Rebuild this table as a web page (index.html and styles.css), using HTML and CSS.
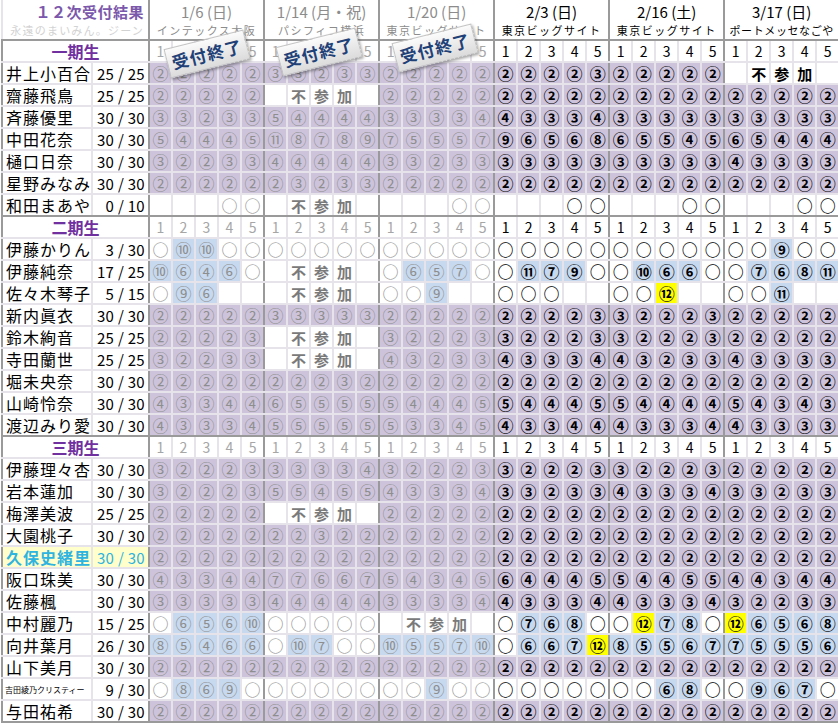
FILE: index.html
```html
<!DOCTYPE html>
<html lang="ja">
<head>
<meta charset="utf-8">
<title>12次受付結果</title>
<link rel="stylesheet" href="styles.css">
</head>
<body>
<div class="wrap">
<table class="grid">
<colgroup>
<col class="c-nm"><col class="c-ct">
<col class="c"><col class="c"><col class="c"><col class="c"><col class="c">
<col class="c"><col class="c"><col class="c"><col class="c"><col class="c">
<col class="c"><col class="c"><col class="c"><col class="c"><col class="c">
<col class="c"><col class="c"><col class="c"><col class="c"><col class="c">
<col class="c"><col class="c"><col class="c"><col class="c"><col class="c">
<col class="c"><col class="c"><col class="c"><col class="c"><col class="c">
</colgroup>
<tr class="hd">
<td colspan="2" class="ttl"><div class="t1">１２次受付結果</div><div class="t2">永遠のまいみん。ジーン</div></td>
<td colspan="5" class="past"><div class="d">1/6 (日)</div><div class="v">インテックス大阪</div></td>
<td colspan="5" class="past"><div class="d">1/14 (月・祝)</div><div class="v">パシフィコ横浜</div></td>
<td colspan="5" class="past"><div class="d">1/20 (日)</div><div class="v">東京ビッグサイト</div></td>
<td colspan="5"><div class="d">2/3 (日)</div><div class="v">東京ビッグサイト</div></td>
<td colspan="5"><div class="d">2/16 (土)</div><div class="v">東京ビッグサイト</div></td>
<td colspan="5"><div class="d">3/17 (日)</div><div class="v vw">ポートメッセなごや</div></td>
</tr>
<tr class="sec"><td colspan="2" class="sh">一期生</td><td>1</td><td>2</td><td>3</td><td>4</td><td>5</td><td>1</td><td>2</td><td>3</td><td>4</td><td>5</td><td>1</td><td>2</td><td>3</td><td>4</td><td>5</td><td>1</td><td>2</td><td>3</td><td>4</td><td>5</td><td>1</td><td>2</td><td>3</td><td>4</td><td>5</td><td>1</td><td>2</td><td>3</td><td>4</td><td>5</td></tr>
<tr class="r"><td class="nm">井上小百合</td><td class="ct">25 / 25</td><td class="p">②</td><td class="p">②</td><td class="p">②</td><td class="p">②</td><td class="p">②</td><td class="p">③</td><td class="p">③</td><td class="p">②</td><td class="p">③</td><td class="p">③</td><td class="p">②</td><td class="p">②</td><td class="p">②</td><td class="p">②</td><td class="p">②</td><td class="p">②</td><td class="p">②</td><td class="p">②</td><td class="p">②</td><td class="p">③</td><td class="p">②</td><td class="p">②</td><td class="p">②</td><td class="p">②</td><td class="p">②</td><td></td><td class="n">不</td><td class="n">参</td><td class="n">加</td><td></td></tr>
<tr class="r"><td class="nm">齋藤飛鳥</td><td class="ct">25 / 25</td><td class="p">②</td><td class="p">②</td><td class="p">②</td><td class="p">②</td><td class="p">②</td><td></td><td class="n">不</td><td class="n">参</td><td class="n">加</td><td></td><td class="p">②</td><td class="p">②</td><td class="p">②</td><td class="p">②</td><td class="p">②</td><td class="p">②</td><td class="p">②</td><td class="p">②</td><td class="p">②</td><td class="p">②</td><td class="p">②</td><td class="p">②</td><td class="p">②</td><td class="p">②</td><td class="p">②</td><td class="p">②</td><td class="p">②</td><td class="p">②</td><td class="p">②</td><td class="p">②</td></tr>
<tr class="r"><td class="nm">斉藤優里</td><td class="ct">30 / 30</td><td class="p">③</td><td class="p">③</td><td class="p">②</td><td class="p">③</td><td class="p">③</td><td class="p">⑤</td><td class="p">④</td><td class="p">④</td><td class="p">④</td><td class="p">④</td><td class="p">③</td><td class="p">③</td><td class="p">③</td><td class="p">③</td><td class="p">④</td><td class="p">④</td><td class="p">③</td><td class="p">③</td><td class="p">③</td><td class="p">④</td><td class="p">③</td><td class="p">③</td><td class="p">③</td><td class="p">③</td><td class="p">③</td><td class="p">③</td><td class="p">③</td><td class="p">③</td><td class="p">③</td><td class="p">③</td></tr>
<tr class="r"><td class="nm">中田花奈</td><td class="ct">30 / 30</td><td class="p">⑤</td><td class="p">④</td><td class="p">④</td><td class="p">④</td><td class="p">⑤</td><td class="p">⑪</td><td class="p">⑧</td><td class="p">⑦</td><td class="p">⑧</td><td class="p">⑨</td><td class="p">⑦</td><td class="p">⑤</td><td class="p">⑤</td><td class="p">⑤</td><td class="p">⑦</td><td class="p">⑨</td><td class="p">⑥</td><td class="p">⑤</td><td class="p">⑥</td><td class="p">⑧</td><td class="p">⑥</td><td class="p">⑤</td><td class="p">⑤</td><td class="p">④</td><td class="p">⑤</td><td class="p">⑥</td><td class="p">⑤</td><td class="p">④</td><td class="p">④</td><td class="p">④</td></tr>
<tr class="r"><td class="nm">樋口日奈</td><td class="ct">30 / 30</td><td class="p">③</td><td class="p">②</td><td class="p">②</td><td class="p">③</td><td class="p">③</td><td class="p">④</td><td class="p">④</td><td class="p">④</td><td class="p">④</td><td class="p">④</td><td class="p">③</td><td class="p">③</td><td class="p">②</td><td class="p">③</td><td class="p">③</td><td class="p">③</td><td class="p">③</td><td class="p">③</td><td class="p">③</td><td class="p">③</td><td class="p">③</td><td class="p">③</td><td class="p">③</td><td class="p">③</td><td class="p">③</td><td class="p">④</td><td class="p">③</td><td class="p">③</td><td class="p">③</td><td class="p">③</td></tr>
<tr class="r"><td class="nm">星野みなみ</td><td class="ct">30 / 30</td><td class="p">②</td><td class="p">②</td><td class="p">②</td><td class="p">②</td><td class="p">②</td><td class="p">②</td><td class="p">③</td><td class="p">②</td><td class="p">③</td><td class="p">③</td><td class="p">②</td><td class="p">②</td><td class="p">②</td><td class="p">②</td><td class="p">②</td><td class="p">②</td><td class="p">②</td><td class="p">②</td><td class="p">②</td><td class="p">②</td><td class="p">②</td><td class="p">②</td><td class="p">②</td><td class="p">②</td><td class="p">②</td><td class="p">②</td><td class="p">②</td><td class="p">②</td><td class="p">②</td><td class="p">②</td></tr>
<tr class="r last"><td class="nm">和田まあや</td><td class="ct">0 / 10</td><td></td><td></td><td></td><td>○</td><td>○</td><td></td><td class="n">不</td><td class="n">参</td><td class="n">加</td><td></td><td></td><td></td><td></td><td>○</td><td>○</td><td></td><td></td><td></td><td>○</td><td>○</td><td></td><td></td><td></td><td>○</td><td>○</td><td></td><td></td><td></td><td>○</td><td>○</td></tr>
<tr class="sec"><td colspan="2" class="sh">二期生</td><td>1</td><td>2</td><td>3</td><td>4</td><td>5</td><td>1</td><td>2</td><td>3</td><td>4</td><td>5</td><td>1</td><td>2</td><td>3</td><td>4</td><td>5</td><td>1</td><td>2</td><td>3</td><td>4</td><td>5</td><td>1</td><td>2</td><td>3</td><td>4</td><td>5</td><td>1</td><td>2</td><td>3</td><td>4</td><td>5</td></tr>
<tr class="r"><td class="nm">伊藤かりん</td><td class="ct">3 / 30</td><td>○</td><td class="b">⑩</td><td class="b">⑩</td><td>○</td><td>○</td><td>○</td><td>○</td><td>○</td><td>○</td><td>○</td><td>○</td><td>○</td><td>○</td><td>○</td><td>○</td><td>○</td><td>○</td><td>○</td><td>○</td><td>○</td><td>○</td><td>○</td><td>○</td><td>○</td><td>○</td><td>○</td><td>○</td><td class="b">⑨</td><td>○</td><td>○</td></tr>
<tr class="r"><td class="nm">伊藤純奈</td><td class="ct">17 / 25</td><td class="b">⑩</td><td class="b">⑥</td><td class="b">④</td><td class="b">⑥</td><td>○</td><td></td><td class="n">不</td><td class="n">参</td><td class="n">加</td><td></td><td>○</td><td class="b">⑥</td><td class="b">⑤</td><td class="b">⑦</td><td>○</td><td>○</td><td class="b">⑪</td><td class="b">⑦</td><td class="b">⑨</td><td>○</td><td>○</td><td class="b">⑩</td><td class="b">⑥</td><td class="b">⑥</td><td>○</td><td>○</td><td class="b">⑦</td><td class="b">⑥</td><td class="b">⑧</td><td class="b">⑪</td></tr>
<tr class="r"><td class="nm">佐々木琴子</td><td class="ct">5 / 15</td><td>○</td><td class="b">⑨</td><td class="b">⑥</td><td></td><td></td><td></td><td class="n">不</td><td class="n">参</td><td class="n">加</td><td></td><td>○</td><td>○</td><td class="b">⑨</td><td></td><td></td><td>○</td><td>○</td><td>○</td><td></td><td></td><td>○</td><td>○</td><td class="y">⑫</td><td></td><td></td><td>○</td><td>○</td><td class="b">⑪</td><td></td><td></td></tr>
<tr class="r"><td class="nm">新内眞衣</td><td class="ct">30 / 30</td><td class="p">②</td><td class="p">②</td><td class="p">②</td><td class="p">②</td><td class="p">②</td><td class="p">③</td><td class="p">③</td><td class="p">③</td><td class="p">③</td><td class="p">③</td><td class="p">②</td><td class="p">②</td><td class="p">②</td><td class="p">②</td><td class="p">②</td><td class="p">②</td><td class="p">②</td><td class="p">②</td><td class="p">②</td><td class="p">③</td><td class="p">③</td><td class="p">②</td><td class="p">②</td><td class="p">②</td><td class="p">③</td><td class="p">②</td><td class="p">②</td><td class="p">②</td><td class="p">②</td><td class="p">②</td></tr>
<tr class="r"><td class="nm">鈴木絢音</td><td class="ct">25 / 25</td><td class="p">②</td><td class="p">②</td><td class="p">②</td><td class="p">②</td><td class="p">③</td><td></td><td class="n">不</td><td class="n">参</td><td class="n">加</td><td></td><td class="p">③</td><td class="p">②</td><td class="p">②</td><td class="p">②</td><td class="p">③</td><td class="p">③</td><td class="p">②</td><td class="p">②</td><td class="p">②</td><td class="p">③</td><td class="p">③</td><td class="p">②</td><td class="p">②</td><td class="p">②</td><td class="p">③</td><td class="p">②</td><td class="p">②</td><td class="p">②</td><td class="p">②</td><td class="p">②</td></tr>
<tr class="r"><td class="nm">寺田蘭世</td><td class="ct">25 / 25</td><td class="p">③</td><td class="p">②</td><td class="p">②</td><td class="p">③</td><td class="p">③</td><td></td><td class="n">不</td><td class="n">参</td><td class="n">加</td><td></td><td class="p">④</td><td class="p">③</td><td class="p">②</td><td class="p">③</td><td class="p">③</td><td class="p">④</td><td class="p">③</td><td class="p">③</td><td class="p">③</td><td class="p">④</td><td class="p">④</td><td class="p">③</td><td class="p">②</td><td class="p">③</td><td class="p">③</td><td class="p">④</td><td class="p">③</td><td class="p">③</td><td class="p">③</td><td class="p">③</td></tr>
<tr class="r"><td class="nm">堀未央奈</td><td class="ct">30 / 30</td><td class="p">②</td><td class="p">②</td><td class="p">②</td><td class="p">②</td><td class="p">②</td><td class="p">②</td><td class="p">②</td><td class="p">②</td><td class="p">③</td><td class="p">②</td><td class="p">②</td><td class="p">②</td><td class="p">②</td><td class="p">②</td><td class="p">②</td><td class="p">②</td><td class="p">②</td><td class="p">②</td><td class="p">②</td><td class="p">②</td><td class="p">②</td><td class="p">②</td><td class="p">②</td><td class="p">②</td><td class="p">②</td><td class="p">②</td><td class="p">②</td><td class="p">②</td><td class="p">②</td><td class="p">②</td></tr>
<tr class="r"><td class="nm">山崎怜奈</td><td class="ct">30 / 30</td><td class="p">④</td><td class="p">③</td><td class="p">③</td><td class="p">④</td><td class="p">④</td><td class="p">⑥</td><td class="p">⑤</td><td class="p">⑤</td><td class="p">⑤</td><td class="p">⑤</td><td class="p">⑤</td><td class="p">④</td><td class="p">④</td><td class="p">④</td><td class="p">⑤</td><td class="p">⑤</td><td class="p">④</td><td class="p">④</td><td class="p">④</td><td class="p">⑤</td><td class="p">⑤</td><td class="p">④</td><td class="p">④</td><td class="p">④</td><td class="p">④</td><td class="p">⑤</td><td class="p">④</td><td class="p">③</td><td class="p">④</td><td class="p">③</td></tr>
<tr class="r last"><td class="nm">渡辺みり愛</td><td class="ct">30 / 30</td><td class="p">④</td><td class="p">③</td><td class="p">③</td><td class="p">③</td><td class="p">④</td><td class="p">⑤</td><td class="p">⑤</td><td class="p">⑤</td><td class="p">⑤</td><td class="p">⑤</td><td class="p">⑤</td><td class="p">③</td><td class="p">③</td><td class="p">④</td><td class="p">⑤</td><td class="p">④</td><td class="p">③</td><td class="p">③</td><td class="p">④</td><td class="p">④</td><td class="p">④</td><td class="p">③</td><td class="p">③</td><td class="p">③</td><td class="p">④</td><td class="p">④</td><td class="p">③</td><td class="p">③</td><td class="p">③</td><td class="p">③</td></tr>
<tr class="sec"><td colspan="2" class="sh">三期生</td><td>1</td><td>2</td><td>3</td><td>4</td><td>5</td><td>1</td><td>2</td><td>3</td><td>4</td><td>5</td><td>1</td><td>2</td><td>3</td><td>4</td><td>5</td><td>1</td><td>2</td><td>3</td><td>4</td><td>5</td><td>1</td><td>2</td><td>3</td><td>4</td><td>5</td><td>1</td><td>2</td><td>3</td><td>4</td><td>5</td></tr>
<tr class="r"><td class="nm">伊藤理々杏</td><td class="ct">30 / 30</td><td class="p">③</td><td class="p">②</td><td class="p">②</td><td class="p">②</td><td class="p">③</td><td class="p">③</td><td class="p">③</td><td class="p">③</td><td class="p">③</td><td class="p">④</td><td class="p">③</td><td class="p">②</td><td class="p">②</td><td class="p">②</td><td class="p">③</td><td class="p">③</td><td class="p">②</td><td class="p">②</td><td class="p">②</td><td class="p">③</td><td class="p">③</td><td class="p">②</td><td class="p">②</td><td class="p">②</td><td class="p">③</td><td class="p">②</td><td class="p">②</td><td class="p">②</td><td class="p">②</td><td class="p">②</td></tr>
<tr class="r"><td class="nm">岩本蓮加</td><td class="ct">30 / 30</td><td class="p">③</td><td class="p">②</td><td class="p">②</td><td class="p">②</td><td class="p">③</td><td class="p">⑤</td><td class="p">⑤</td><td class="p">④</td><td class="p">⑤</td><td class="p">⑤</td><td class="p">④</td><td class="p">③</td><td class="p">③</td><td class="p">③</td><td class="p">④</td><td class="p">③</td><td class="p">③</td><td class="p">②</td><td class="p">③</td><td class="p">③</td><td class="p">④</td><td class="p">③</td><td class="p">③</td><td class="p">③</td><td class="p">④</td><td class="p">③</td><td class="p">③</td><td class="p">②</td><td class="p">③</td><td class="p">③</td></tr>
<tr class="r"><td class="nm">梅澤美波</td><td class="ct">25 / 25</td><td class="p">②</td><td class="p">②</td><td class="p">②</td><td class="p">②</td><td class="p">②</td><td></td><td class="n">不</td><td class="n">参</td><td class="n">加</td><td></td><td class="p">②</td><td class="p">②</td><td class="p">②</td><td class="p">②</td><td class="p">②</td><td class="p">②</td><td class="p">②</td><td class="p">②</td><td class="p">②</td><td class="p">②</td><td class="p">②</td><td class="p">②</td><td class="p">②</td><td class="p">②</td><td class="p">②</td><td class="p">②</td><td class="p">②</td><td class="p">②</td><td class="p">②</td><td class="p">②</td></tr>
<tr class="r"><td class="nm">大園桃子</td><td class="ct">30 / 30</td><td class="p">②</td><td class="p">②</td><td class="p">②</td><td class="p">②</td><td class="p">②</td><td class="p">②</td><td class="p">②</td><td class="p">③</td><td class="p">②</td><td class="p">②</td><td class="p">②</td><td class="p">②</td><td class="p">②</td><td class="p">②</td><td class="p">②</td><td class="p">②</td><td class="p">②</td><td class="p">②</td><td class="p">②</td><td class="p">②</td><td class="p">②</td><td class="p">②</td><td class="p">②</td><td class="p">②</td><td class="p">②</td><td class="p">②</td><td class="p">②</td><td class="p">②</td><td class="p">②</td><td class="p">②</td></tr>
<tr class="r kubo"><td class="nm">久保史緒里</td><td class="ct">30 / 30</td><td class="p">②</td><td class="p">②</td><td class="p">②</td><td class="p">②</td><td class="p">②</td><td class="p">②</td><td class="p">②</td><td class="p">②</td><td class="p">②</td><td class="p">②</td><td class="p">②</td><td class="p">②</td><td class="p">②</td><td class="p">②</td><td class="p">②</td><td class="p">②</td><td class="p">②</td><td class="p">②</td><td class="p">②</td><td class="p">②</td><td class="p">②</td><td class="p">②</td><td class="p">②</td><td class="p">②</td><td class="p">②</td><td class="p">②</td><td class="p">②</td><td class="p">②</td><td class="p">②</td><td class="p">②</td></tr>
<tr class="r"><td class="nm">阪口珠美</td><td class="ct">30 / 30</td><td class="p">④</td><td class="p">③</td><td class="p">③</td><td class="p">④</td><td class="p">④</td><td class="p">⑦</td><td class="p">⑦</td><td class="p">⑥</td><td class="p">⑥</td><td class="p">⑦</td><td class="p">⑤</td><td class="p">④</td><td class="p">③</td><td class="p">④</td><td class="p">⑤</td><td class="p">⑥</td><td class="p">④</td><td class="p">④</td><td class="p">④</td><td class="p">⑤</td><td class="p">⑤</td><td class="p">④</td><td class="p">④</td><td class="p">⑤</td><td class="p">⑤</td><td class="p">④</td><td class="p">④</td><td class="p">③</td><td class="p">④</td><td class="p">④</td></tr>
<tr class="r"><td class="nm">佐藤楓</td><td class="ct">30 / 30</td><td class="p">③</td><td class="p">③</td><td class="p">③</td><td class="p">③</td><td class="p">③</td><td class="p">④</td><td class="p">④</td><td class="p">④</td><td class="p">④</td><td class="p">④</td><td class="p">③</td><td class="p">③</td><td class="p">③</td><td class="p">③</td><td class="p">④</td><td class="p">④</td><td class="p">③</td><td class="p">③</td><td class="p">③</td><td class="p">④</td><td class="p">④</td><td class="p">③</td><td class="p">③</td><td class="p">③</td><td class="p">④</td><td class="p">③</td><td class="p">②</td><td class="p">②</td><td class="p">③</td><td class="p">③</td></tr>
<tr class="r"><td class="nm">中村麗乃</td><td class="ct">15 / 25</td><td>○</td><td class="b">⑥</td><td class="b">⑤</td><td class="b">⑥</td><td class="b">⑩</td><td>○</td><td>○</td><td>○</td><td>○</td><td>○</td><td></td><td class="n">不</td><td class="n">参</td><td class="n">加</td><td></td><td>○</td><td class="b">⑦</td><td class="b">⑥</td><td class="b">⑧</td><td>○</td><td>○</td><td class="y">⑫</td><td class="b">⑦</td><td class="b">⑧</td><td>○</td><td class="y">⑫</td><td class="b">⑥</td><td class="b">⑤</td><td class="b">⑥</td><td class="b">⑧</td></tr>
<tr class="r"><td class="nm">向井葉月</td><td class="ct">26 / 30</td><td class="b">⑧</td><td class="b">⑤</td><td class="b">④</td><td class="b">⑥</td><td class="b">⑥</td><td>○</td><td class="b">⑩</td><td class="b">⑦</td><td>○</td><td>○</td><td class="b">⑩</td><td class="b">⑤</td><td class="b">⑤</td><td class="b">⑦</td><td class="b">⑩</td><td>○</td><td class="b">⑥</td><td class="b">⑥</td><td class="b">⑦</td><td class="y">⑫</td><td class="b">⑧</td><td class="b">⑤</td><td class="b">⑤</td><td class="b">⑥</td><td class="b">⑦</td><td class="b">⑦</td><td class="b">⑤</td><td class="b">⑤</td><td class="b">⑤</td><td class="b">⑥</td></tr>
<tr class="r"><td class="nm">山下美月</td><td class="ct">30 / 30</td><td class="p">②</td><td class="p">②</td><td class="p">②</td><td class="p">②</td><td class="p">②</td><td class="p">②</td><td class="p">②</td><td class="p">②</td><td class="p">②</td><td class="p">②</td><td class="p">②</td><td class="p">②</td><td class="p">②</td><td class="p">②</td><td class="p">②</td><td class="p">②</td><td class="p">②</td><td class="p">②</td><td class="p">②</td><td class="p">②</td><td class="p">②</td><td class="p">②</td><td class="p">②</td><td class="p">②</td><td class="p">②</td><td class="p">②</td><td class="p">②</td><td class="p">②</td><td class="p">②</td><td class="p">②</td></tr>
<tr class="r"><td class="nm sm">吉田綾乃クリスティー</td><td class="ct">9 / 30</td><td>○</td><td class="b">⑧</td><td class="b">⑥</td><td class="b">⑨</td><td>○</td><td>○</td><td>○</td><td>○</td><td>○</td><td>○</td><td>○</td><td>○</td><td class="b">⑨</td><td>○</td><td>○</td><td>○</td><td>○</td><td>○</td><td>○</td><td>○</td><td>○</td><td>○</td><td class="b">⑥</td><td class="b">⑧</td><td>○</td><td>○</td><td class="b">⑨</td><td class="b">⑥</td><td class="b">⑦</td><td>○</td></tr>
<tr class="r end"><td class="nm">与田祐希</td><td class="ct">30 / 30</td><td class="p">②</td><td class="p">②</td><td class="p">②</td><td class="p">②</td><td class="p">②</td><td class="p">②</td><td class="p">②</td><td class="p">②</td><td class="p">②</td><td class="p">②</td><td class="p">②</td><td class="p">②</td><td class="p">②</td><td class="p">②</td><td class="p">②</td><td class="p">②</td><td class="p">②</td><td class="p">②</td><td class="p">②</td><td class="p">②</td><td class="p">②</td><td class="p">②</td><td class="p">②</td><td class="p">②</td><td class="p">②</td><td class="p">②</td><td class="p">②</td><td class="p">②</td><td class="p">②</td><td class="p">②</td></tr>
</table>
<div class="stamp s1">受付終了</div>
<div class="stamp s2">受付終了</div>
<div class="stamp s3">受付終了</div>
</div>
</body>
</html>
```

FILE: styles.css
```css
html, body {
  margin: 0;
  padding: 0;
  background: #fff;
}
body {
  font-family: "Noto Sans CJK JP", "Noto Sans", sans-serif;
  color: #000;
}
.wrap {
  position: relative;
  width: 838px;
  padding-left: 1px;
  box-sizing: border-box;
}
.grid {
  border-collapse: collapse;
  table-layout: fixed;
  width: 837px;
}
.c-nm { width: 90px; }
.c-ct { width: 57px; }
.c { width: 23px; }

.grid td {
  padding: 0;
  border: 2px solid #e6e3ea;
  text-align: center;
  vertical-align: middle;
  font-size: 16px;
  line-height: 19px;
  white-space: nowrap;
  overflow: hidden;
}
.grid tr { height: 22px; }

/* header row */
.hd { height: 40px !important; }
.hd td {
  border-top: 0;
  border-right-color: #9a9a9a;
  border-bottom-color: #9a9a9a;
  color: #000;
}
.hd td.past { color: #8c8c8c; }
.ttl { text-align: right !important; padding-right: 4px !important; }
.t1 {
  font-size: 15px;
  font-weight: 700;
  color: #7b58ab;
  line-height: 20px;
  letter-spacing: 0.5px;
}
.t2 {
  font-size: 11px;
  color: #d2d2d2;
  letter-spacing: 1.2px;
  line-height: 16px;
}
.d {
  font-size: 15px;
  line-height: 20px;
}
.v {
  font-size: 11px;
  line-height: 16px;
  letter-spacing: 1.5px;
}
.v.vw { letter-spacing: 0.6px; }

/* section header rows */
.sec td {
  border-top-color: #9a9a9a;
  font-size: 14px;
  color: #000;
}
.sec td:nth-child(-n+16) { color: #a6a6a6; }
.sec td:nth-child(5n+1) { border-right-color: #9a9a9a; }
.sec td.sh {
  color: #7030a0;
  font-size: 16px;
  font-weight: 700;
  border-left-color: #9a9a9a;
}

/* data rows */
.r td {
  color: #000;
  font-weight: 700;
}
.r td:nth-child(-n+17) {
  color: #8e8e8e;
  font-weight: 400;
}
.r td:nth-child(5n+2) { border-right-color: #9a9a9a; }
.r td:first-child { border-left-color: #9a9a9a; }
.r.last td { border-bottom-color: #9a9a9a; }
.r.end td { border-bottom-color: #9a9a9a; }

.r td.nm {
  text-align: left;
  padding-left: 3px;
  font-size: 16px;
  letter-spacing: 1px;
  color: #000;
  font-weight: 400;
}
.r td.nm.sm {
  font-size: 8px;
  letter-spacing: 0;
  padding-left: 2px;
}
.r td.ct {
  text-align: right;
  padding-right: 3px;
  font-size: 15px;
  color: #000;
  font-weight: 400;
  white-space: pre;
  letter-spacing: 0.3px;
}
.r td.n {
  font-size: 15px;
  font-weight: 700;
}
.r td.n:nth-child(-n+17) {
  color: #7a7a7a;
  font-weight: 700;
}

.p { background: #cdc4dc; }
.b { background: #c7d9ef; }
.y { background: #ffff00; }

.kubo td.nm, .kubo td.ct {
  background: #ffffcc;
  color: #2fb3df;
}
.kubo td.nm { font-weight: 700; }

/* overlay stamps */
.stamp {
  position: absolute;
  width: 80px;
  height: 28px;
  line-height: 28px;
  text-align: center;
  font-size: 17px;
  font-weight: 700;
  letter-spacing: 1px;
  color: #1f4178;
  background: linear-gradient(#fbfbfb, #dcdcdc);
  border: 1px solid #c4c4c4;
  box-shadow: 1px 2px 3px rgba(0, 0, 0, 0.35);
  transform: rotate(-14deg);
}
.s1 { left: 166px; top: 39px; }
.s2 { left: 278px; top: 37px; }
.s3 { left: 394px; top: 33px; }
```
